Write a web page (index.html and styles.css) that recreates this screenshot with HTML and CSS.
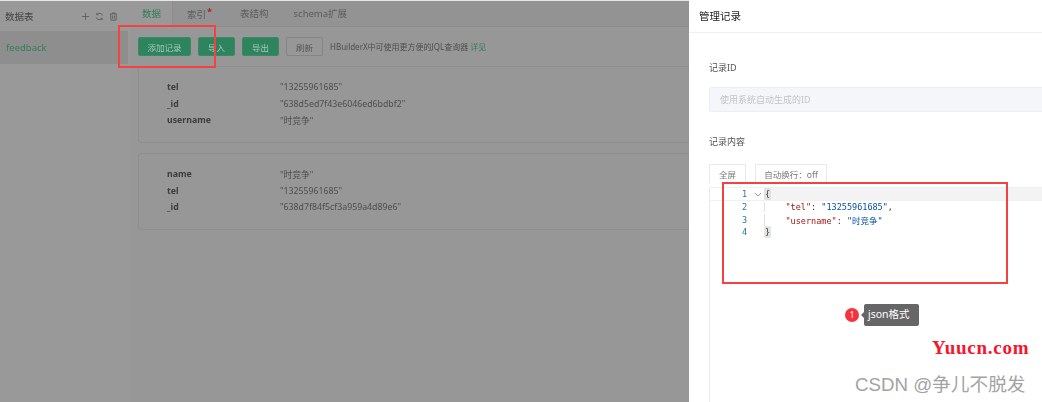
FILE: index.html
```html
<!DOCTYPE html>
<html lang="zh">
<head>
<meta charset="utf-8">
<title>管理记录</title>
<link rel="stylesheet" href="styles.css">
</head>
<body>
<div class="app">
  <div class="shade">
    <aside class="sidebar">
      <div class="side-head">
        <span class="side-title">数据表</span>
        <span class="side-icons">
          <svg class="ico" viewBox="0 0 10 10"><path d="M5 1v8M1 5h8"/></svg>
          <svg class="ico" viewBox="0 0 10 10"><path d="M8.5 4A3.6 3.6 0 0 0 2 3M1.5 6A3.6 3.6 0 0 0 8 7M2 1v2h2M8 9V7H6"/></svg>
          <svg class="ico" viewBox="0 0 10 10"><path d="M1 2.2h8M3.6 2V1h2.8v1M2 2.5V9h6V2.5M4 4v3.4M6 4v3.4"/></svg>
        </span>
      </div>
      <div class="side-item">feedback</div>
    </aside>
    <main class="main">
      <nav class="tabs">
        <span class="tab tab-active">数据</span>
        <span class="tab tab-index">索引<i class="star">*</i></span>
        <span class="tab tab-struct">表结构</span>
        <span class="tab">schema扩展</span>
      </nav>
      <div class="toolbar">
        <button class="btn btn-green btn-add">添加记录</button>
        <button class="btn btn-green">导入</button>
        <button class="btn btn-green">导出</button>
        <button class="btn btn-plain">刷新</button>
        <span class="hint">HBuilderX中可使用更方便的JQL查询器 <a class="link">详见</a></span>
      </div>
      <section class="card">
        <div class="row"><b>tel</b><span>"13255961685"</span></div>
        <div class="row"><b>_id</b><span>"638d5ed7f43e6046ed6bdbf2"</span></div>
        <div class="row"><b>username</b><span>"时竞争"</span></div>
      </section>
      <section class="card">
        <div class="row"><b>name</b><span>"时竞争"</span></div>
        <div class="row"><b>tel</b><span>"13255961685"</span></div>
        <div class="row"><b>_id</b><span>"638d7f84f5cf3a959a4d89e6"</span></div>
      </section>
    </main>
  </div>
  <div class="panel">
    <h2 class="panel-title">管理记录</h2>
    <div class="panel-body">
      <div class="label label-id">记录ID</div>
      <div class="input">使用系统自动生成的ID</div>
      <div class="label label-content">记录内容</div>
      <div class="editor-btns">
        <button class="ebtn ebtn-full">全屏</button>
        <button class="ebtn ebtn-wrap">自动换行：off</button>
      </div>
      <div class="editor">
        <div class="line line-current"><span class="num">1</span><svg class="fold" viewBox="0 0 10 6"><path d="M1 1l4 4 4-4"/></svg><span class="code"><span class="brace">{</span></span></div>
        <div class="line"><span class="num">2</span><span class="nofold"></span><span class="code guide">    <span class="k">"tel"</span>: <span class="s">"13255961685"</span>,</span></div>
        <div class="line"><span class="num">3</span><span class="nofold"></span><span class="code guide">    <span class="k">"username"</span>: <span class="s">"时竞争"</span></span></div>
        <div class="line"><span class="num">4</span><span class="nofold"></span><span class="code"><span class="brace">}</span></span></div>
      </div>
    </div>
  </div>
  <div class="mark mark-a"></div>
  <div class="mark mark-b"></div>
  <span class="dot">1</span>
  <span class="tip">json格式</span>
  <span class="wm-red">Yuucn.com</span>
  <span class="wm-gray">CSDN @争儿不脱发</span>
</div>
</body>
</html>
```
FILE: styles.css
```css
* { box-sizing: border-box; }
html, body { margin: 0; padding: 0; }
body {
  width: 1042px;
  height: 402px;
  overflow: hidden;
  background: #fff;
  font-family: "Noto Sans", "Noto Sans CJK SC", sans-serif;
}
.app { position: relative; display: flex; width: 1042px; height: 402px; overflow: hidden; }

.shade {
  display: flex;
  flex: 0 0 689px;
  height: 402px;
  overflow: hidden;
  background: #979797;
  border-top: 1px solid #e6e6e6;
  filter: blur(0.35px);
}
.sidebar { flex: 0 0 130px; background: #999; }
.side-head {
  display: flex;
  justify-content: space-between;
  align-items: center;
  height: 30px;
  padding: 0 12px 0 5px;
}
.side-title { font-size: 9.5px; color: #444; }
.side-icons { display: flex; gap: 5px; }
.ico { width: 9px; height: 9px; fill: none; stroke: #5e5e5e; stroke-width: 1; }
.side-item {
  height: 33px;
  line-height: 33px;
  padding-left: 6px;
  margin-right: 2px;
  font-size: 9.5px;
  color: #367f5b;
  background: #8e8e8e;
}

.main { flex: 1; min-width: 0; }
.tabs {
  display: flex;
  align-items: center;
  height: 26px;
  background: #939393;
  border-bottom: 1px solid #8e8e8e;
  font-size: 9.5px;
  color: #5c5c5c;
}
.tab { padding: 0 0 2px 0; margin-right: 26px; white-space: nowrap; }
.tab-active {
  display: flex;
  align-items: center;
  height: 25px;
  width: 43px;
  margin-right: 14px;
  padding-left: 12px;
  color: #2f7f59;
  background: #999;
  border-right: 1px solid #8d8d8d;
}
.tab-index { width: 31px; margin-right: 22px; }
.tab-struct { margin-right: 25px; }
.star { color: #b0202a; font-style: normal; font-weight: 700; font-size: 9px; vertical-align: 3px; margin-left: 1px; }

.toolbar {
  display: flex;
  align-items: center;
  gap: 7px;
  height: 39px;
  padding: 0 0 0 8px;
}
.btn {
  width: 37px;
  height: 19px;
  padding: 0;
  font: inherit;
  font-size: 8.5px;
  border-radius: 2px;
}
.btn-green { background: #2f8460; border: 1px solid #3a8a68; color: #a5c9b8; }
.btn-add { width: 53px; }
.btn-plain { background: #979797; border: 1px solid #858585; color: #555; }
.hint { font-size: 8px; color: #4e4e4e; white-space: nowrap; }
.link { color: #2f7f59; }

.card {
  width: 600px;
  height: 77px;
  margin: 0 0 10px 8px;
  padding: 12px 0 0 28px;
  border: 1px solid #8e8e8e;
  border-radius: 3px;
}
.row { display: flex; align-items: center; height: 16.5px; font-size: 8.75px; color: #4e4e4e; }
.row b { flex: 0 0 113px; color: #3d3d3d; font-weight: 700; }

.panel { flex: 1; min-width: 0; background: #fff; filter: blur(0.25px); }
.panel-title {
  margin: 0;
  height: 33px;
  padding: 0 0 0 10px;
  line-height: 33px;
  font-size: 10.5px;
  font-weight: 400;
  color: #222;
  border-bottom: 1px solid #eff0f2;
}
.panel-body { padding-left: 20px; }
.label { font-size: 9px; color: #555; height: 13px; line-height: 13px; }
.label-id { margin-top: 28px; }
.label-content { margin-top: 23px; }
.input {
  width: 340px;
  height: 25px;
  margin-top: 13px;
  padding-left: 10px;
  line-height: 24px;
  font-size: 9px;
  color: #c3c5ca;
  background: #f5f6f9;
  border: 1px solid #eceef2;
  border-radius: 2px;
}
.editor-btns { display: flex; gap: 9px; margin-top: 16px; }
.ebtn {
  height: 19px;
  padding: 0;
  font: inherit;
  font-size: 8.5px;
  color: #777;
  background: #fff;
  border: 1px solid #e8e9ed;
  border-bottom: 0;
}
.ebtn-full { width: 37px; }
.ebtn-wrap { width: 72px; }

.editor {
  width: 340px;
  height: 240px;
  margin-top: 4px;
  border-left: 1px solid #e8e9ed;
  border-top: 1px solid #f0f1f3;
  font-family: "DejaVu Sans Mono", "Noto Sans CJK SC", monospace;
  font-size: 8.5px;
}
.line { display: flex; align-items: center; height: 12.7px; white-space: pre; }
.line-current { background: linear-gradient(#f3f3f3, #f3f3f3) left 54px top / 100% 100% no-repeat; box-shadow: inset 0 -1px #f1f1f1; }
.num { flex: 0 0 37px; text-align: right; color: #2b7a90; }
.fold { flex: 0 0 8px; width: 8px; height: 5px; margin: 0 3px 0 7px; fill: none; stroke: #777; stroke-width: 1; }
.nofold { flex: 0 0 18px; }
.code { color: #333; letter-spacing: 0; }
.guide { box-shadow: -1px 0 #e3e3e3; }
.brace { background: #dfe6df; box-shadow: 0 0 0 .5px #c9cfc9; }
.k { color: #a31515; }
.s { color: #0451a5; }

.mark { position: absolute; border: 2px solid #f44242; }
.mark-a { left: 118px; top: 25px; width: 98px; height: 43px; border-width: 2px; }
.mark-b { left: 722px; top: 182px; width: 286px; height: 102px; }

.dot {
  position: absolute;
  left: 845px;
  top: 308px;
  width: 14px;
  height: 14px;
  border-radius: 50%;
  background: #f5333f;
  color: #fff;
  font-size: 8px;
  line-height: 14px;
  text-align: center;
}
.tip {
  position: absolute;
  left: 864px;
  top: 304px;
  width: 55px;
  height: 22px;
  line-height: 21px;
  padding-left: 4px;
  font-size: 10.5px;
  color: #fff;
  background: #666;
  border-radius: 2px;
}
.tip::before {
  content: "";
  position: absolute;
  left: -3px;
  top: 8px;
  border: 3px solid transparent;
  border-left: 0;
  border-right-color: #666;
}
.wm-red {
  position: absolute;
  left: 932px;
  top: 336px;
  font-family: "Liberation Serif", serif;
  font-weight: 700;
  font-size: 19px;
  line-height: 24px;
  letter-spacing: .75px;
  color: #f7142c;
  white-space: nowrap;
}
.wm-gray {
  position: absolute;
  left: 855px;
  top: 373px;
  font-family: "Liberation Sans", "Noto Sans CJK SC", sans-serif;
  font-size: 18.7px;
  line-height: 24px;
  color: #a3a3a3;
  white-space: nowrap;
}
```
